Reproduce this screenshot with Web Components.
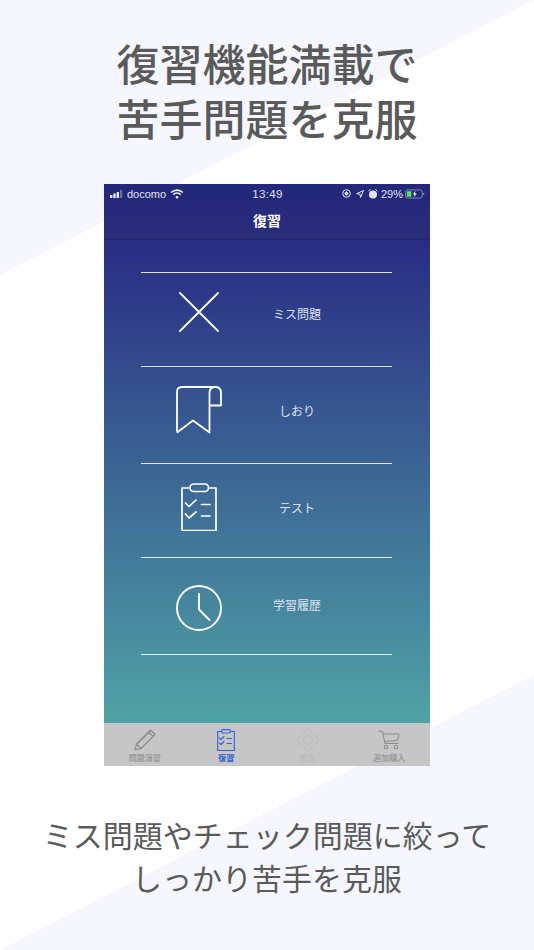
<!DOCTYPE html>
<html lang="ja">
<head>
<meta charset="utf-8">
<title>復習</title>
<style>
  html, body { margin: 0; padding: 0; }
  body { font-family: "Liberation Sans", "Noto Sans CJK JP", sans-serif; }
</style>
</head>
<body>
<promo-screen>
  <span slot="head">復習機能満載で<br>苦手問題を克服</span>
  <phone-frame>
    <status-bar></status-bar>
    <nav-bar>復習</nav-bar>
    <review-list>
      <review-row h="94" label="ミス問題" icon-up="15" label-up="12">
        <svg width="40" height="40" viewBox="0 0 40 40" fill="none" stroke="#fff" stroke-width="1.8" stroke-linecap="round"><path d="M1 1L39 39M39 1L1 39"/></svg>
      </review-row>
      <review-row h="97" label="しおり" icon-up="10" label-up="9">
        <svg width="46" height="48" viewBox="0 0 46 48" fill="none" stroke="#fff" stroke-width="1.8" stroke-linejoin="round"><path d="M1 46.500V6Q1 1 6 1H39.500Q45 1 45 7V19.500H33.500V7Q33.500 1 39.500 1M33.500 19.500V46.500L17 34.500L1 46.500"/></svg>
      </review-row>
      <review-row h="94" label="テスト" icon-up="7" label-up="6">
        <svg width="36" height="48" viewBox="0 0 36 48" fill="none" stroke="#fff" stroke-width="1.700" stroke-linecap="round" stroke-linejoin="round"><path d="M8 5H1V47.500H35V5H28"/><rect x="9" y="1" width="18.500" height="7.500" rx="3.700"/><path d="M4.500 20L8 23.500L15 17M4.500 31L8 35L15 29M20.500 21.500H29M20.500 33H29"/></svg>
      </review-row>
      <review-row h="97" label="学習履歴" icon-up="-3" label-up="3">
        <svg width="46" height="46" viewBox="0 0 46 46" fill="none" stroke="#fff" stroke-width="1.900" stroke-linecap="round" stroke-linejoin="round"><circle cx="23" cy="23" r="22"/><path d="M23 9V24.500L33.500 35"/></svg>
      </review-row>
    </review-list>
    <tab-bar>
      <tab-item label="問題演習" color="#9b9b9b">
        <svg width="22" height="22" viewBox="0 0 22 22" fill="none" stroke="#8c8c8c" stroke-width="1.100" stroke-linejoin="round"><path d="M1 21L2.500 15L16.500 1L21 5.500L7 19.500Z M2.500 15L7 19.500M14.500 3L19 7.500M4 14L16 2.500"/></svg>
      </tab-item>
      <tab-item label="復習" color="#2458d8">
        <svg width="18" height="22" viewBox="0 0 18 22" fill="none" stroke="#2e5fe0" stroke-width="1.100" stroke-linecap="round" stroke-linejoin="round"><path d="M4 2.500H.7V21.500H17.300V2.500H14"/><rect x="4.500" y=".6" width="9" height="3.400" rx="1.700"/><path d="M2.500 9L4 10.500L7 7.500M2.500 14L4 15.500L7 12.500M10 9.500H14.500M10 14.500H14.500"/></svg>
      </tab-item>
      <tab-item label="設定" color="#bcbcbc">
        <svg width="22" height="22" viewBox="0 0 22 22" fill="none" stroke="#bdbdbd" stroke-width="1" stroke-linejoin="round"><circle cx="11" cy="11" r="4.200"/><path d="M9 1H13L13.500 3.800L15.800 4.800L18.100 3.200L20.800 5.900L19.200 8.200L18.300 9.200L21 9V13L18.400 13.500L17.400 15.800L19 18.100L16.300 20.800L14 19.200L13.500 18.400L13 21H9L8.500 18.400L6.200 17.400L3.900 19L1.200 16.300L2.800 14L1 13V9L3.600 8.500L4.600 6.200L3 3.900L5.700 1.200L8 2.800Z"/></svg>
      </tab-item>
      <tab-item label="追加購入" color="#9b9b9b">
        <svg width="22" height="20" viewBox="0 0 22 20" fill="none" stroke="#8c8c8c" stroke-width="1.100" stroke-linecap="round" stroke-linejoin="round"><path d="M1 1L4.500 1.800L7 13.500H20M5 4H21L19.500 10.500L6.300 11.500"/><circle cx="8" cy="17" r="1.700"/><circle cx="18" cy="17" r="1.700"/></svg>
      </tab-item>
    </tab-bar>
  </phone-frame>
  <span slot="foot">ミス問題やチェック問題に絞って<br>しっかり苦手を克服</span>
</promo-screen>

<script>
// ページ全体
class PromoScreen extends HTMLElement {
  constructor() {
    super();
    this.attachShadow({ mode: 'open' });
    this.shadowRoot.innerHTML = `
      <style>
        :host {
          display: flex;
          flex-direction: column;
          align-items: center;
          width: 534px;
          height: 950px;
          overflow: hidden;
          color: #5a5a5a;
          background-color: #fff;
          background-image:
            linear-gradient(to bottom right, #f6f7fe 50%, transparent 50%),
            linear-gradient(to bottom right, transparent 50%, #f6f7fe 50%);
          background-size: 534px 275px;
          background-position: top left, bottom right;
          background-repeat: no-repeat;
        }
        .head {
          margin-top: 39px;
          height: 145px;
          font-size: 43px;
          line-height: 55px;
          font-weight: 500;
          text-align: center;
        }
        .foot {
          margin-top: 49px;
          font-size: 30px;
          line-height: 43px;
          text-align: center;
        }
      </style>
      <div class="head"><slot name="head"></slot></div>
      <slot></slot>
      <div class="foot"><slot name="foot"></slot></div>
    `;
  }
}

// スマホの画面
class PhoneFrame extends HTMLElement {
  constructor() {
    super();
    this.attachShadow({ mode: 'open' });
    this.shadowRoot.innerHTML = `
      <style>
        :host {
          display: flex;
          flex-direction: column;
          width: 326px;
          height: 582px;
          flex: none;
          background: linear-gradient(#262880 0, #292c84 56px, #50a3a6 539px);
        }
      </style>
      <slot></slot>
    `;
  }
}

class StatusBar extends HTMLElement {
  constructor() {
    super();
    this.attachShadow({ mode: 'open' });
    this.shadowRoot.innerHTML = `
      <style>
        :host {
          display: grid;
          grid-template-columns: 1fr auto 1fr;
          align-items: center;
          height: 19px;
          padding: 0 5px 0 6px;
          font: 11px "Liberation Sans", sans-serif;
          color: #e0e1ee;
          background: #24287a;
        }
        .left, .right { display: flex; align-items: center; }
        .left { gap: 4px; }
        .right { justify-content: flex-end; gap: 5px; }
        .time { font-size: 11.500px; letter-spacing: .3px; }
        svg { display: block; }
      </style>
      <div class="left">
        <svg width="13" height="8" viewBox="0 0 13 8" fill="#eeeef6"><rect x="0" y="5" width="2.400" height="3" rx=".5"/><rect x="3.300" y="3.500" width="2.400" height="4.500" rx=".5"/><rect x="6.600" y="2" width="2.400" height="6" rx=".5"/><rect x="9.900" y="0" width="2.400" height="8" rx=".5" opacity=".35"/></svg>
        <span>docomo</span>
        <svg width="14" height="10" viewBox="0 0 13 10" fill="none" stroke="#f4f4f8" stroke-width="1.600"><path d="M.7 3.500A8.200 8.200 0 0 1 12.300 3.500M2.800 5.600A5.200 5.200 0 0 1 10.200 5.600"/><circle cx="6.500" cy="8.300" r="1.300" fill="#f4f4f8" stroke="none"/></svg>
      </div>
      <div class="time">13:49</div>
      <div class="right">
        <svg width="9" height="9" viewBox="0 0 9 9" fill="none" stroke="#e4e5f0" stroke-width="1"><circle cx="4.500" cy="4.500" r="3.800"/><circle cx="4.500" cy="4.500" r="1.500" fill="#e4e5f0"/></svg>
        <svg width="8" height="8" viewBox="0 0 8 8" fill="none" stroke="#e4e5f0" stroke-width="1" stroke-linejoin="round"><path d="M7.500.5L.7 3.700L4 4.200L4.500 7.500Z"/></svg>
        <svg style="margin-left:-1px" width="10" height="10" viewBox="0 0 10 10" fill="#e4e5f0"><circle cx="5" cy="5.500" r="4"/><path d="M.5 2L2.500.5M9.500 2L7.500.5" stroke="#e4e5f0" stroke-width="1"/></svg>
        <span style="margin-left:-2px">29%</span>
        <svg style="margin-left:-3px" width="20" height="10" viewBox="0 0 22 10"><rect x=".5" y=".5" width="18.500" height="9" rx="2.500" fill="none" stroke="#8e90b8"/><path d="M20 3.500V6.500Q21.500 6 21.500 5T20 3.500" fill="#8e90b8"/><rect x="2" y="2" width="5" height="6" fill="#5fe05f"/><path d="M11.500 1.500L8.500 5.500H10.500L9.500 8.500L13 4.500H11Z" fill="#fff"/></svg>
      </div>
    `;
  }
}

class NavBar extends HTMLElement {
  constructor() {
    super();
    this.attachShadow({ mode: 'open' });
    this.shadowRoot.innerHTML = `
      <style>
        :host {
          display: flex;
          align-items: center;
          justify-content: center;
          flex: none;
          height: 33px;
          padding-bottom: 3px;
          font-size: 14px;
          font-weight: 700;
          color: #fff;
          background: linear-gradient(#26297c, #292d78);
          border-bottom: 1px solid #20246a;
        }
      </style>
      <slot></slot>
    `;
  }
}

class ReviewList extends HTMLElement {
  constructor() {
    super();
    this.attachShadow({ mode: 'open' });
    this.shadowRoot.innerHTML = `
      <style>
        :host {
          display: block;
          flex: 1;
          margin: 0 38px 0 37px;
          padding-top: 32px;
        }
        .rule { height: 1px; background: rgba(255,255,255,.85); }
      </style>
      <div class="rule"></div>
      <slot></slot>
    `;
  }
}

// 一行: アイコンとラベル。icon-up / label-up は中央からのずれ (下マージンで指定)
class ReviewRow extends HTMLElement {
  constructor() {
    super();
    this.attachShadow({ mode: 'open' });
    this.shadowRoot.innerHTML = `
      <style>
        :host {
          display: grid;
          grid-template-columns: 116px 80px;
          align-items: center;
          box-sizing: border-box;
          border-bottom: 1px solid rgba(255,255,255,.85);
        }
        .icon { display: flex; justify-content: center; }
        .label { text-align: center; font-size: 12px; color: #dfe3ef; }
      </style>
      <div class="icon"><slot></slot></div>
      <div class="label"></div>
    `;
  }

  connectedCallback() {
    this.style.height = this.getAttribute('h') + 'px';
    const icon = this.shadowRoot.querySelector('.icon');
    const label = this.shadowRoot.querySelector('.label');
    label.textContent = this.getAttribute('label');
    icon.style.marginBottom = this.getAttribute('icon-up') + 'px';
    label.style.marginBottom = this.getAttribute('label-up') + 'px';
  }
}

class TabBar extends HTMLElement {
  constructor() {
    super();
    this.attachShadow({ mode: 'open' });
    this.shadowRoot.innerHTML = `
      <style>
        :host {
          display: grid;
          grid-template-columns: repeat(4, 1fr);
          flex: none;
          height: 43px;
          background: #c6c6c6;
        }
      </style>
      <slot></slot>
    `;
  }
}

class TabItem extends HTMLElement {
  constructor() {
    super();
    this.attachShadow({ mode: 'open' });
    this.shadowRoot.innerHTML = `
      <style>
        :host {
          display: flex;
          flex-direction: column;
          align-items: center;
          padding-top: 6px;
        }
        .icon { height: 22px; display: flex; align-items: center; }
        .label { font-size: 8px; line-height: 12px; font-weight: 700; margin-top: 2px; }
      </style>
      <div class="icon"><slot></slot></div>
      <div class="label"></div>
    `;
  }

  connectedCallback() {
    const label = this.shadowRoot.querySelector('.label');
    label.textContent = this.getAttribute('label');
    label.style.color = this.getAttribute('color');
  }
}

customElements.define('promo-screen', PromoScreen);
customElements.define('phone-frame', PhoneFrame);
customElements.define('status-bar', StatusBar);
customElements.define('nav-bar', NavBar);
customElements.define('review-list', ReviewList);
customElements.define('review-row', ReviewRow);
customElements.define('tab-bar', TabBar);
customElements.define('tab-item', TabItem);
</script>
</body>
</html>
